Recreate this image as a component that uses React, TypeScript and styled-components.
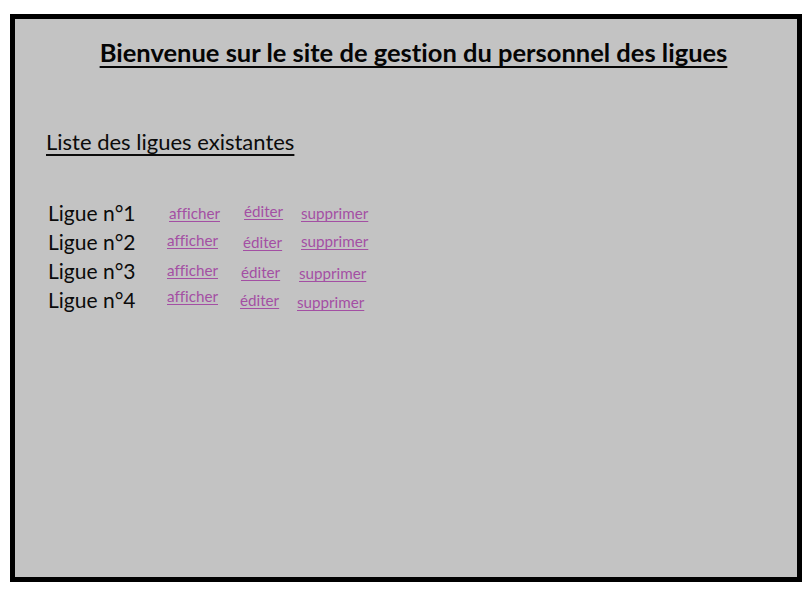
import React from "react";
import styled, { createGlobalStyle } from "styled-components";

const GlobalStyle = createGlobalStyle`
  html, body {
    margin: 0;
    padding: 0;
    background: #ffffff;
  }
  body {
    font-family: Lato, "Open Sans", "Liberation Sans", sans-serif;
    color: #0b0b0b;
    font-variant-ligatures: none;
  }
`;

const Frame = styled.main`
  box-sizing: border-box;
  margin: 14px 0 0 10px;
  width: 792px;
  height: 568px;
  border: 5px solid #000;
  background: #c3c3c3;
  padding-top: 18px;
`;

const Title = styled.h1`
  margin: 0;
  padding-left: 15px;
  text-align: center;
  font-family: Lato, "Open Sans", sans-serif;
  font-weight: 700;
  font-size: 25.5px;
  line-height: 30px;
  color: #050505;
  font-variant-ligatures: none;
  text-decoration: underline;
  text-decoration-thickness: 2px;
  text-underline-offset: 4px;
  text-decoration-skip-ink: none;
`;

const Subtitle = styled.h2`
  margin: 62px 0 0 31px;
  font-family: Lato, "Open Sans", sans-serif;
  font-weight: 400;
  font-size: 22px;
  line-height: 26px;
  color: #0b0b0b;
  font-variant-ligatures: none;
  text-decoration: underline;
  text-decoration-thickness: 2px;
  text-underline-offset: 4px;
  text-decoration-skip-ink: none;
`;

const List = styled.ul`
  list-style: none;
  margin: 43px 0 0 33px;
  padding: 0;
`;

const Row = styled.li`
  white-space: nowrap;
  font-size: 21px;
  line-height: 29px;
  height: 29px;
`;

const Label = styled.span<{ $w: number }>`
  display: inline-block;
  width: ${(p) => p.$w}px;
  font-family: Lato, "Open Sans", sans-serif;
  font-size: 21px;
  color: #0b0b0b;
`;

const Cell = styled.span<{ $w?: number; $raise: number }>`
  display: inline-block;
  width: ${(p) => (p.$w ? `${p.$w}px` : "auto")};
  vertical-align: ${(p) => p.$raise}px;
  line-height: 18px;
`;

const Action = styled.a`
  font-family: Lato, "Open Sans", sans-serif;
  font-size: 15.2px;
  color: #a34fa3;
  font-variant-ligatures: none;
  text-decoration: underline;
  text-decoration-thickness: 1px;
  text-underline-offset: 2px;
  text-decoration-skip-ink: none;
  cursor: pointer;
`;

type Slot = { w?: number; raise: number };
type League = { n: number; label: number; slots: [Slot, Slot, Slot] };

const leagues: League[] = [
  { n: 1, label: 121, slots: [{ w: 75, raise: 2 }, { w: 57, raise: 4 }, { raise: 2 }] },
  { n: 2, label: 119, slots: [{ w: 76, raise: 4 }, { w: 58, raise: 2 }, { raise: 3 }] },
  { n: 3, label: 119, slots: [{ w: 74, raise: 3 }, { w: 58, raise: 1 }, { raise: 0 }] },
  { n: 4, label: 119, slots: [{ w: 73, raise: 6 }, { w: 57, raise: 2 }, { raise: 0 }] },
];

const actions = ["afficher", "éditer", "supprimer"];

export default function App() {
  return (
    <>
      <GlobalStyle />
      <Frame>
        <Title>Bienvenue sur le site de gestion du personnel des ligues</Title>
        <Subtitle>Liste des ligues existantes</Subtitle>
        <List>
          {leagues.map((l) => (
            <Row key={l.n}>
              <Label $w={l.label}>Ligue n°{l.n}</Label>
              {l.slots.map((s, i) => (
                <Cell key={i} $w={s.w} $raise={s.raise}>
                  <Action>{actions[i]}</Action>
                </Cell>
              ))}
            </Row>
          ))}
        </List>
      </Frame>
    </>
  );
}
